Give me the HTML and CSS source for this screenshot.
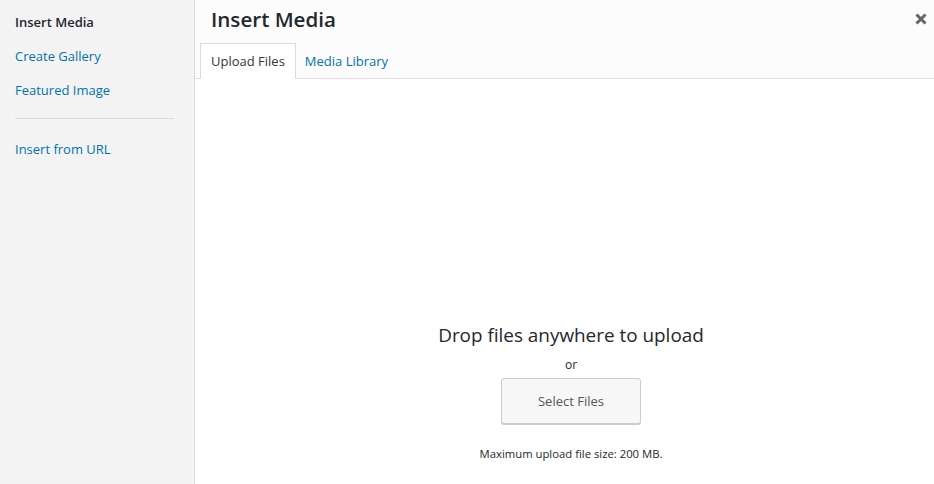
FILE: index.html
```html
<!DOCTYPE html>
<html lang="en">
<head>
<meta charset="utf-8">
<title>Insert Media</title>
<link rel="stylesheet" href="styles.css">
</head>
<body>
<div class="frame">
  <nav class="menu">
    <a class="menu-item active">Insert Media</a>
    <a class="menu-item">Create Gallery</a>
    <a class="menu-item">Featured Image</a>
    <div class="separator"></div>
    <a class="menu-item">Insert from URL</a>
  </nav>
  <main class="main">
    <header class="head">
      <div class="title-row">
        <h1 class="title">Insert Media</h1>
        <button class="close" aria-label="Close">
          <svg width="12" height="12" viewBox="0 0 12 12"><path d="M1.5 1.5 L10.5 10.5 M10.5 1.5 L1.5 10.5" stroke="#666" stroke-width="3" stroke-linecap="butt" fill="none"/></svg>
        </button>
      </div>
      <div class="router">
        <a class="tab active">Upload Files</a>
        <a class="tab">Media Library</a>
      </div>
    </header>
    <section class="content">
      <div class="upload">
        <p class="drop">Drop files anywhere to upload</p>
        <p class="or">or</p>
        <button class="select">Select Files</button>
        <p class="max">Maximum upload file size: 200 MB.</p>
      </div>
    </section>
  </main>
</div>
</body>
</html>
```

FILE: styles.css
```css
* { box-sizing: border-box; }
html, body { margin: 0; padding: 0; height: 100%; }
body {
  font-family: "Open Sans", "Noto Sans", sans-serif;
  color: #23282d;
  background: #fff;
  overflow: hidden;
}
.frame {
  display: flex;
  height: 484px;
}
.menu {
  width: 195px;
  flex: none;
  background: #f3f3f3;
  border-right: 1px solid #ddd;
  padding-top: 5px;
  display: flex;
  flex-direction: column;
}
.menu-item {
  display: block;
  padding: 8px 15px;
  font-size: 13px;
  line-height: 18px;
  color: #0073aa;
  text-decoration: none;
}
.menu-item.active {
  color: #23282d;
  font-weight: 600;
}
.separator {
  height: 1px;
  background: #ddd;
  margin: 11px 20px 13px 15px;
}
.main {
  flex: 1;
  display: flex;
  flex-direction: column;
  min-width: 0;
}
.head {
  background: #fcfcfc;
}
.title-row {
  display: flex;
  justify-content: space-between;
  align-items: flex-start;
}
.title {
  margin: 0;
  padding-left: 16px;
  font-size: 20.6px;
  font-weight: 600;
  line-height: 38px;
  color: #23282d;
}
.close {
  border: 0;
  background: none;
  padding: 0;
  margin: 13px 7px 0 0;
  width: 12px;
  height: 12px;
  display: flex;
}
.router {
  margin-top: 5px;
  display: flex;
  padding-left: 5px;
  height: 36px;
  border-bottom: 1px solid #ddd;
}
.tab {
  display: block;
  padding: 0 10px;
  font-size: 13px;
  line-height: 34px;
  border: 1px solid transparent;
  border-bottom: 0;
  color: #0073aa;
  text-decoration: none;
}
.tab + .tab {
  padding-left: 8px;
}
.tab.active {
  background: #fff;
  border-color: #ddd;
  color: #32373c;
  height: 36px;
}
.content {
  flex: 1;
  background: #fff;
}
.upload {
  padding-left: 13px;
  display: flex;
  flex-direction: column;
  align-items: center;
  text-align: center;
}
.drop {
  margin: 242px 0 0;
  font-size: 18.9px;
  line-height: 28px;
  color: #23282d;
}
.or {
  margin: 7px 0 0;
  font-size: 12px;
  line-height: 18px;
  color: #23282d;
}
.select {
  margin-top: 4px;
  height: 46px;
  padding: 0 36px;
  font-family: inherit;
  font-size: 13px;
  line-height: 44px;
  color: #555;
  background: #f7f7f7;
  border: 1px solid #ccc;
  border-radius: 3px;
  box-shadow: 0 1px 0 #ccc;
}
.max {
  margin: 22px 0 0;
  font-size: 11.3px;
  line-height: 16px;
  color: #23282d;
}
```
